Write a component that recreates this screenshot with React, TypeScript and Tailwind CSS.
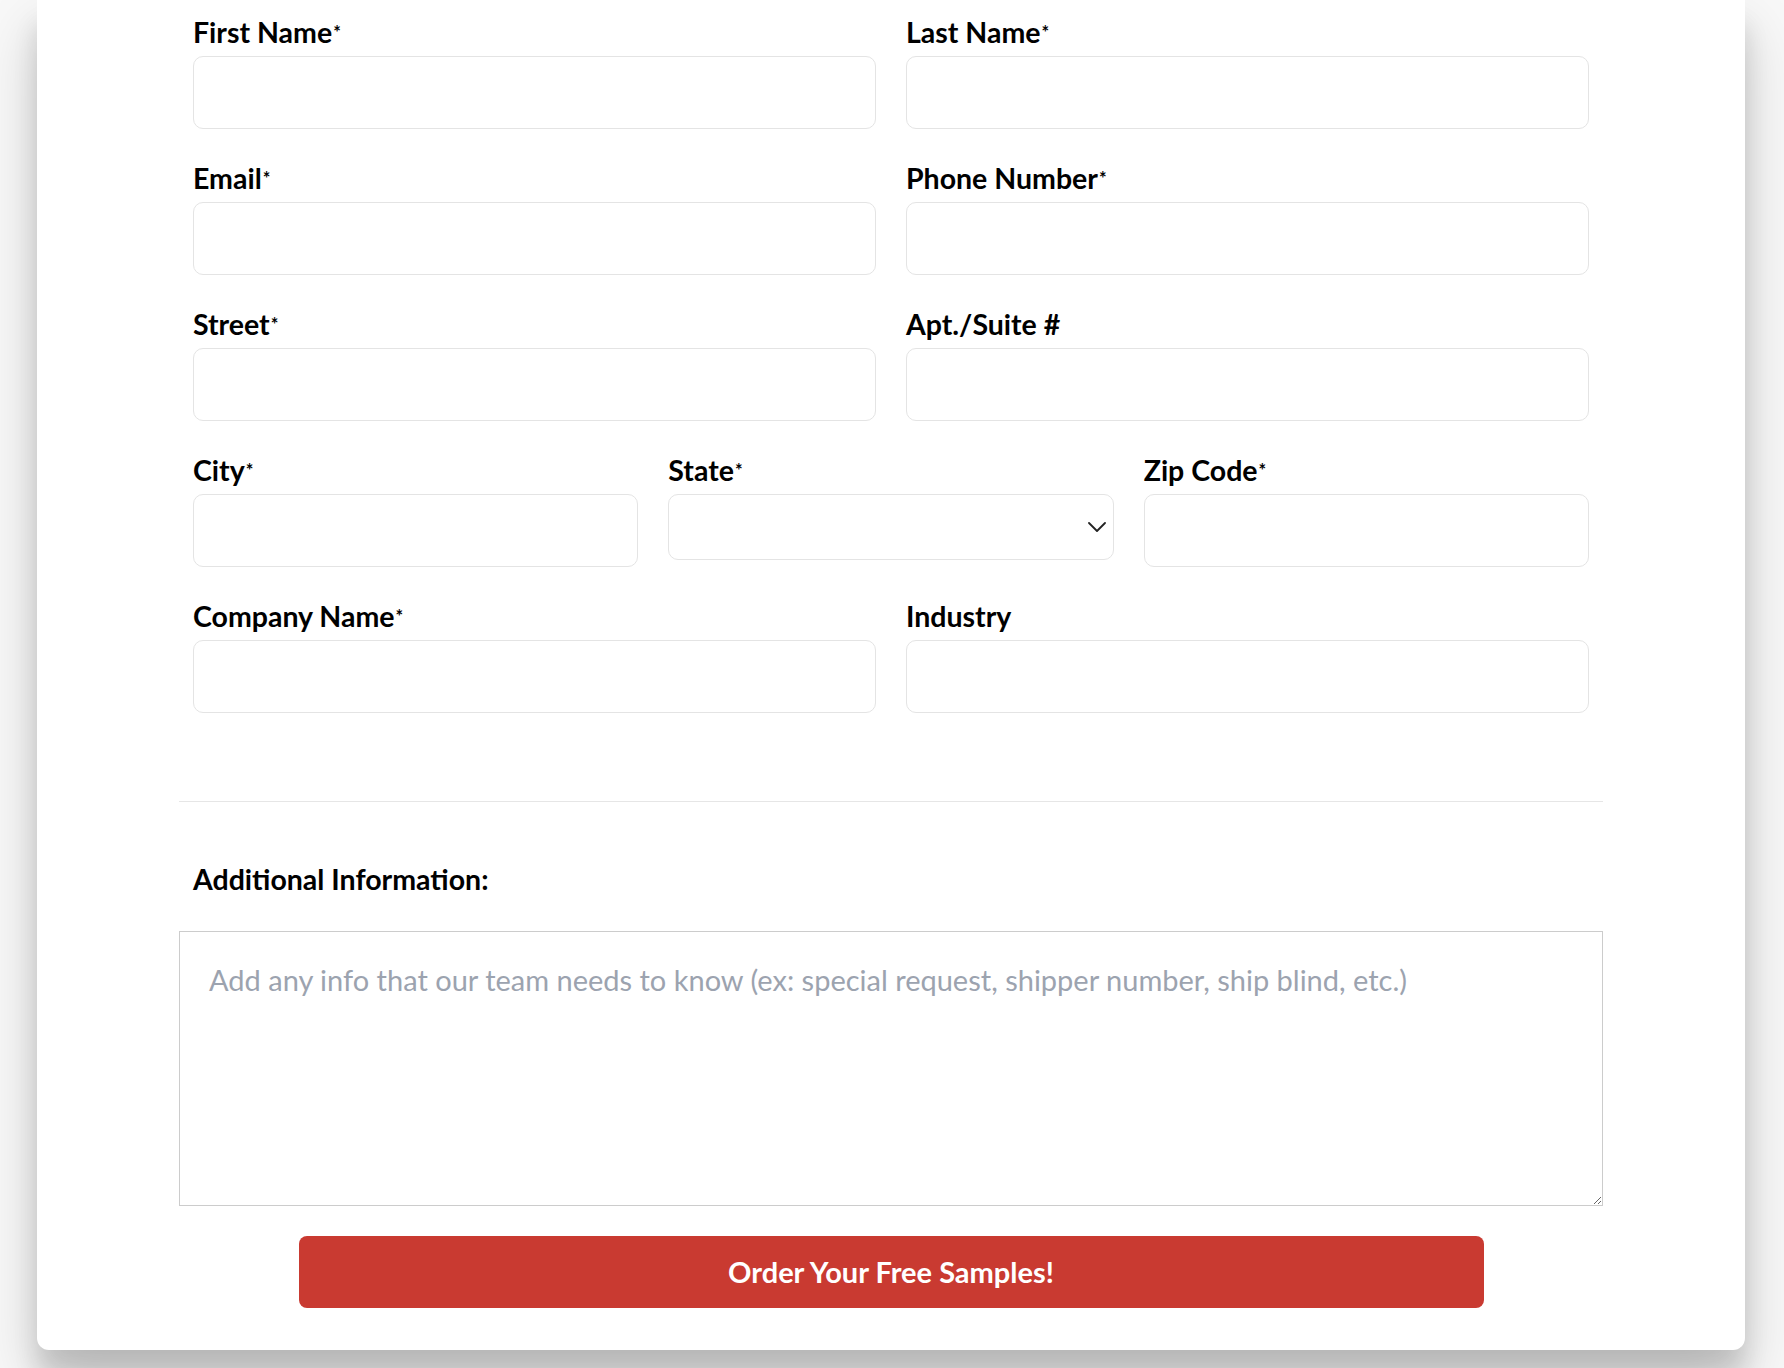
import { ReactNode } from "react";

const font = { fontFamily: "Lato, 'Open Sans', sans-serif" };

function Label({ text, required }: { text: string; required?: boolean }) {
  return (
    <label className="block h-[32px] text-[28.5px] leading-[32px] font-bold text-black mb-[8px] whitespace-nowrap">
      {text}
      {required && (
        <span className="relative top-[-4px] ml-[1px] text-[18px] leading-[0] align-baseline">*</span>
      )}
    </label>
  );
}

function Field({ label, required, children }: { label: string; required?: boolean; children?: ReactNode }) {
  return (
    <div>
      <Label text={label} required={required} />
      {children ?? (
        <input
          type="text"
          className="block w-full h-[73px] rounded-[10px] border border-[#e4e4e4] bg-white px-4 text-[22px] outline-none"
        />
      )}
    </div>
  );
}

export default function App() {
  return (
    <div className="min-h-[1368px] bg-[#f8f8f8] overflow-hidden" style={font}>
      <div className="ml-[37px] w-[1708px] h-[1350px] bg-white rounded-b-[12px] shadow-[0_30px_60px_rgba(0,0,0,0.18),0_25px_25px_rgba(0,0,0,0.12)] px-[142px] pt-[16px]">
        <div className="px-[14px] flex flex-col gap-y-[33px]">
          <div className="grid grid-cols-2 gap-x-[30px]">
            <Field label="First Name" required />
            <Field label="Last Name" required />
          </div>
          <div className="grid grid-cols-2 gap-x-[30px]">
            <Field label="Email" required />
            <Field label="Phone Number" required />
          </div>
          <div className="grid grid-cols-2 gap-x-[30px]">
            <Field label="Street" required />
            <Field label="Apt./Suite #" />
          </div>
          <div className="grid grid-cols-3 gap-x-[30px]">
            <Field label="City" required />
            <Field label="State" required>
              <div className="relative">
                <select className="block w-full h-[66px] appearance-none rounded-[10px] border border-[#e4e4e4] bg-white px-4 text-[22px] outline-none">
                  <option value=""></option>
                </select>
                <svg
                  className="pointer-events-none absolute right-[8px] top-1/2 -translate-y-1/2"
                  width="18"
                  height="10"
                  viewBox="0 0 18 10"
                  fill="none"
                >
                  <path d="M1 1l8 8 8-8" stroke="#222" strokeWidth="1.8" strokeLinecap="round" strokeLinejoin="round" />
                </svg>
              </div>
            </Field>
            <Field label="Zip Code" required />
          </div>
          <div className="grid grid-cols-2 gap-x-[30px]">
            <Field label="Company Name" required />
            <Field label="Industry" />
          </div>
        </div>

        <div className="mt-[88px] border-t border-[#e6e6e6]" />

        <div className="mt-[61px] px-[14px] h-[32px] text-[28.5px] leading-[32px] font-bold text-black">
          Additional Information:
        </div>

        <textarea
          className="mt-[36px] block w-full h-[275px] border border-[#cccccc] bg-white pt-[30px] px-[29px] text-[29px] leading-[36px] text-[#333] placeholder:text-[#9ca3af] outline-none"
          placeholder="Add any info that our team needs to know (ex: special request, shipper number, ship blind, etc.)"
        />

        <div className="mt-[30px] flex justify-center">
          <button className="w-[1185px] h-[72px] rounded-[8px] bg-[#c93a31] text-white text-[29px] font-bold">
            Order Your Free Samples!
          </button>
        </div>
      </div>
    </div>
  );
}
